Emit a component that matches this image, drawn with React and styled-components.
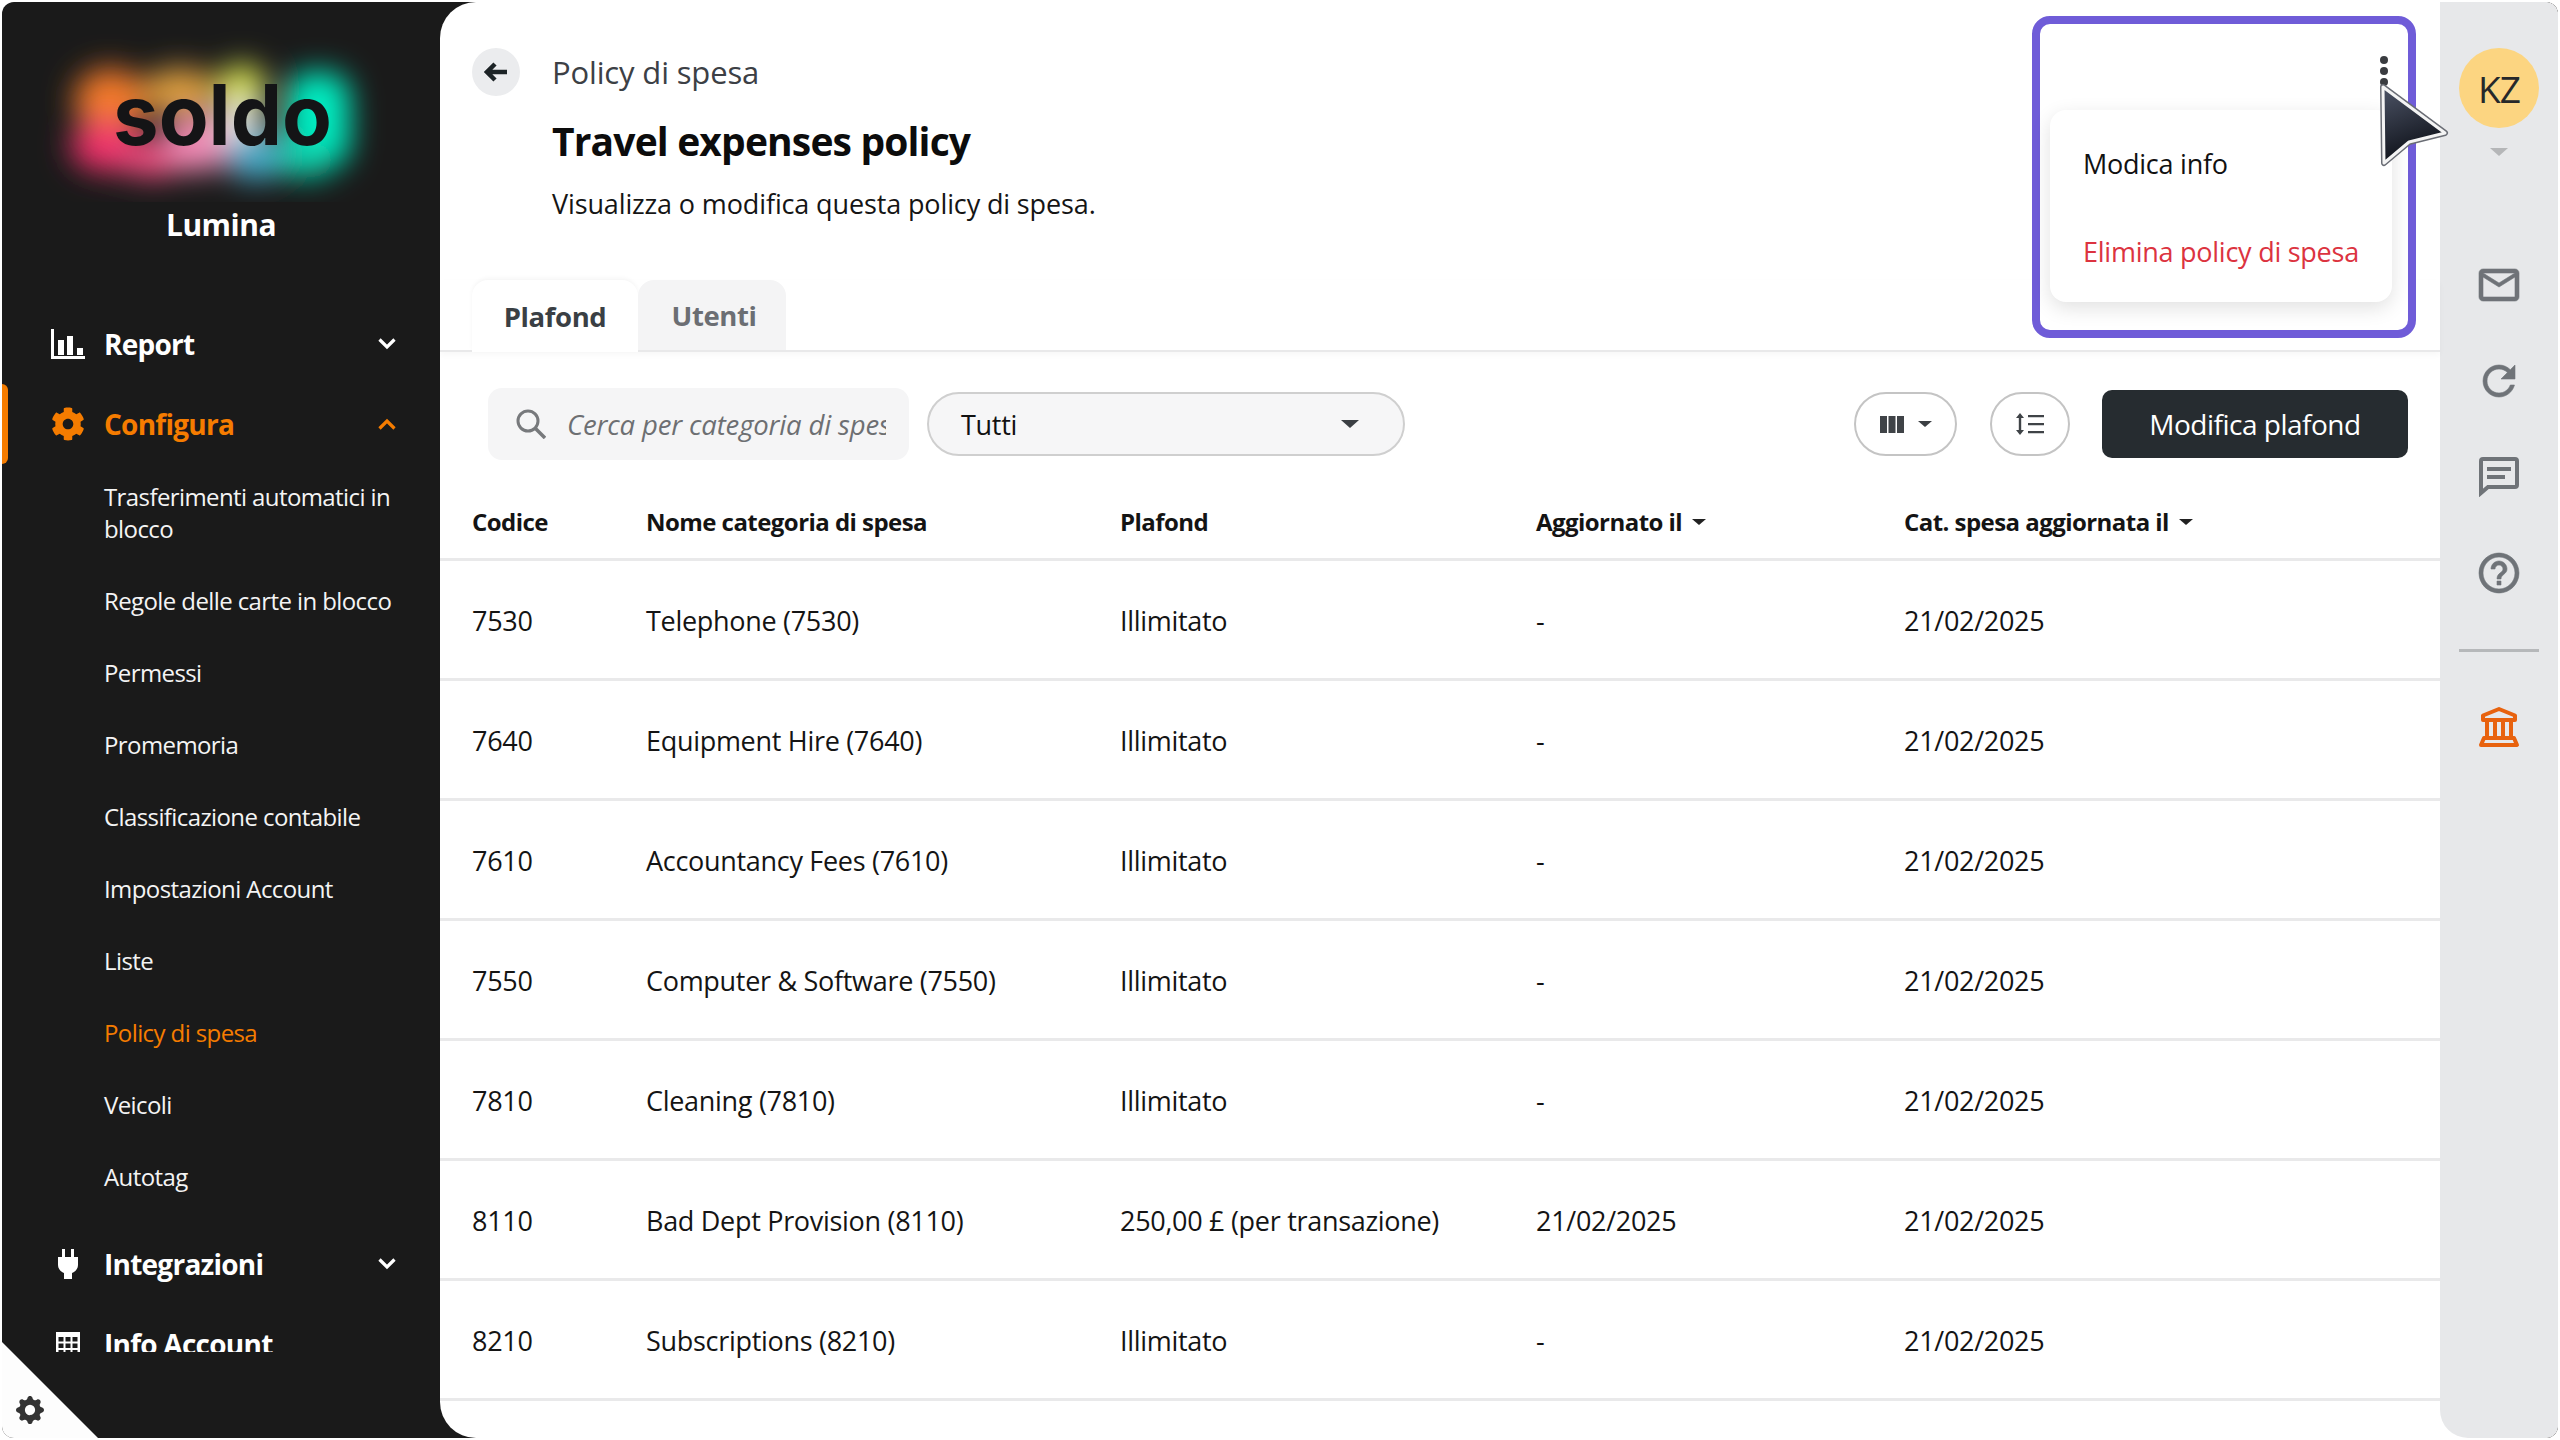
import React from "react";
import styled, { createGlobalStyle } from "styled-components";
import { FaCog } from "react-icons/fa";
import { BsGearFill } from "react-icons/bs";

const GlobalStyle = createGlobalStyle`
  html, body {
    margin: 0;
    padding: 0;
    background: #fff;
    font-family: "Open Sans", "Noto Sans", sans-serif;
    color: #111;
  }
  * { box-sizing: border-box; }
`;

const Frame = styled.div`
  position: relative;
  width: 2560px;
  height: 1440px;
  padding: 2px;
  overflow: hidden;
`;

const Shell = styled.div`
  display: flex;
  height: 100%;
  background: #1a1a1a;
  border-radius: 12px;
  overflow: hidden;
`;

/* ---------- left sidebar ---------- */

const Sidebar = styled.aside`
  position: relative;
  flex: 0 0 438px;
  display: flex;
  flex-direction: column;
  color: #fff;
`;

const LogoArt = styled.svg`
  display: block;
  width: 438px;
  height: 200px;
`;

const Workspace = styled.div`
  height: 46px;
  margin-bottom: 56px;
  line-height: 46px;
  text-align: center;
  font-size: 30px;
  font-weight: 700;
  letter-spacing: -0.5px;
`;

const Nav = styled.nav`
  height: 1048px;
  overflow: hidden;
`;

const NavRow = styled.div`
  position: relative;
  display: flex;
  align-items: center;
  height: 80px;
  padding: 0 44px 0 48px;
  font-size: 28px;
  font-weight: 700;
  letter-spacing: -0.75px;
  color: ${(p) => (p.$active ? "#f57c00" : "#fff")};

  ${(p) =>
    p.$active &&
    `&::before {
      content: "";
      position: absolute;
      left: 0;
      top: 0;
      width: 6px;
      height: 100%;
      background: #f57c00;
      border-radius: 0 6px 6px 0;
    }`}
`;

const NavIcon = styled.span`
  flex: 0 0 36px;
  display: flex;
  justify-content: center;
  margin-right: 18px;
  font-size: 34px;
  line-height: 0;
`;

const NavLabel = styled.span`
  flex: 1;
`;

const SubMenu = styled.div`
  margin: -3px 0 11px;
`;

const SubItem = styled.div`
  padding: 20px 24px 20px 102px;
  font-size: 24px;
  line-height: 32px;
  letter-spacing: -0.6px;
  color: ${(p) => (p.$active ? "#f57c00" : "#f4f4f4")};
`;

const SettingsCorner = styled.div`
  position: absolute;
  left: 0;
  bottom: 0;
  width: 96px;
  height: 96px;
  background: #fdfdfd;
  clip-path: polygon(0 0, 100% 100%, 0 100%);
  color: #333;
  font-size: 28px;

  svg {
    position: absolute;
    left: 14px;
    bottom: 14px;
  }
`;

/* ---------- main panel ---------- */

const Main = styled.div`
  flex: 1;
  display: flex;
  background: #fff;
  border-radius: 36px 12px 12px 36px;
  overflow: hidden;
`;

const Content = styled.main`
  position: relative;
  flex: 1;
  min-width: 0;
`;

const BackRow = styled.div`
  display: flex;
  align-items: center;
  gap: 32px;
  padding: 46px 0 0 32px;
`;

const BackButton = styled.button`
  display: flex;
  align-items: center;
  justify-content: center;
  width: 48px;
  height: 48px;
  padding: 0;
  border: 0;
  border-radius: 50%;
  background: #ebecee;
  color: #1c2326;
`;

const Crumb = styled.span`
  font-size: 31px;
  letter-spacing: -0.15px;
  color: #3c4045;
`;

const TitleBlock = styled.div`
  padding: 17px 0 0 112px;
`;

const Title = styled.h1`
  margin: 0;
  font-size: 39px;
  line-height: 56px;
  font-weight: 700;
  letter-spacing: -0.85px;
  color: #0c0c0c;
`;

const Subtitle = styled.p`
  margin: 17px 0 0;
  font-size: 27px;
  line-height: 36px;
  letter-spacing: -0.13px;
  color: #151515;
`;

const TabBar = styled.div`
  display: flex;
  height: 72px;
  margin-top: 58px;
  padding-left: 32px;
  border-bottom: 2px solid #e9e9ea;
  box-shadow: 0 3px 6px rgba(0, 0, 0, 0.03);
`;

const Tab = styled.div`
  display: flex;
  align-items: center;
  justify-content: center;
  width: ${(p) => p.$width}px;
  height: ${(p) => (p.$active ? "72px" : "70px")};
  padding-left: ${(p) => (p.$active ? "0" : "4px")};
  border-radius: 16px 16px 0 0;
  font-size: 27.5px;
  font-weight: 700;
  letter-spacing: -0.4px;
  background: ${(p) => (p.$active ? "#fff" : "#f4f4f5")};
  color: ${(p) => (p.$active ? "#3a3f44" : "#6b6e73")};
  box-shadow: ${(p) => (p.$active ? "0 -2px 4px rgba(0,0,0,.04)" : "none")};
  position: relative;
`;

const Toolbar = styled.div`
  display: flex;
  align-items: center;
  height: 72px;
  margin-top: 36px;
  padding: 0 32px 0 48px;
`;

const SearchBox = styled.label`
  display: flex;
  align-items: center;
  gap: 21px;
  width: 421px;
  height: 72px;
  padding: 0 23px 0 28px;
  background: #f5f5f6;
  border-radius: 14px;
  color: #6f7174;
`;

const SearchInput = styled.input`
  flex: 1;
  min-width: 0;
  border: 0;
  padding: 0;
  background: transparent;
  font: italic 27.5px "Open Sans", sans-serif;
  letter-spacing: -0.15px;

  &::placeholder {
    color: #6d6f72;
    opacity: 1;
  }
`;

const SelectBox = styled.div`
  display: flex;
  align-items: center;
  justify-content: space-between;
  width: 478px;
  height: 64px;
  margin-left: 18px;
  padding: 0 44px 0 32px;
  background: #f6f6f7;
  border: 2px solid #cfcfcf;
  border-radius: 32px;
  font-size: 27px;
  letter-spacing: -0.3px;
`;

const Spacer = styled.div`
  flex: 1;
`;

const Caret = styled.span`
  display: inline-block;
  width: 0;
  height: 0;
  border-left: ${(p) => p.$size}px solid transparent;
  border-right: ${(p) => p.$size}px solid transparent;
  border-top: ${(p) => Math.round(p.$size * 0.9)}px solid ${(p) => p.$color || "#3b3f43"};
`;

const PillButton = styled.button`
  display: flex;
  align-items: center;
  justify-content: center;
  gap: 14px;
  width: ${(p) => p.$width}px;
  height: 64px;
  margin-right: ${(p) => p.$gap}px;
  padding: 0;
  background: #fff;
  border: 2px solid #c4c4c4;
  border-radius: 32px;
`;

const PrimaryButton = styled.button`
  width: 306px;
  height: 68px;
  padding: 0;
  border: 0;
  border-radius: 10px;
  background: #262c30;
  color: #fff;
  font: 28px "Open Sans", sans-serif;
  letter-spacing: -0.5px;
`;

const TableRow = styled.div`
  display: grid;
  grid-template-columns: 174px 474px 416px 368px 1fr;
  align-items: center;
  height: ${(p) => (p.$head ? "76px" : "120px")};
  padding-left: 32px;
  padding-top: ${(p) => (p.$head ? "0" : "2px")};
  border-bottom: 3px solid #e9e9ea;
  font-size: ${(p) => (p.$head ? "24px" : "27px")};
  font-weight: ${(p) => (p.$head ? 700 : 400)};
  letter-spacing: ${(p) => (p.$head ? "-0.55px" : "-0.3px")};
  color: #141414;
  ${(p) => p.$head && "margin-top: 25px;"}
`;

const HeadCell = styled.span`
  display: flex;
  align-items: center;
  gap: 10px;
`;

/* ---------- overflow menu with highlight ---------- */

const Highlight = styled.div`
  position: absolute;
  top: 14px;
  right: 24px;
  display: flex;
  flex-direction: column;
  width: 384px;
  height: 322px;
  background: #fff;
  border: 8px solid #6f5cd8;
  border-radius: 18px;
`;

const Kebab = styled.div`
  display: flex;
  flex-direction: column;
  gap: 3px;
  align-self: flex-end;
  margin: 32px 20px 0 0;
`;

const KebabDot = styled.span`
  width: 8px;
  height: 8px;
  border-radius: 50%;
  background: #3a3c40;
`;

const Menu = styled.div`
  height: 192px;
  margin: 24px 16px 0 10px;
  padding: 9px 0 7px 33px;
  background: #fff;
  border-radius: 16px;
  box-shadow: 0 6px 20px rgba(0, 0, 0, 0.12);
`;

const MenuItem = styled.div`
  display: flex;
  align-items: center;
  height: 88px;
  font-size: 27px;
  letter-spacing: -0.25px;
  color: ${(p) => (p.$danger ? "#dc3340" : "#111")};
`;

const Pointer = styled.svg`
  position: absolute;
  left: 2376px;
  top: 80px;
  width: 76px;
  height: 90px;
`;

/* ---------- right rail ---------- */

const Rail = styled.aside`
  flex: 0 0 118px;
  display: flex;
  flex-direction: column;
  align-items: center;
  padding-top: 46px;
  background: #e7e8ea;
  border-radius: 0 12px 12px 28px;
  color: #6f7378;
`;

const Avatar = styled.div`
  display: flex;
  align-items: center;
  justify-content: center;
  width: 80px;
  height: 80px;
  margin-bottom: 20px;
  border-radius: 50%;
  background: #fcd581;
  color: #26282a;
  font-size: 37px;
  letter-spacing: -1px;
`;

const RailSlot = styled.div`
  display: flex;
  align-items: center;
  justify-content: center;
  height: 96px;
  line-height: 0;
`;

const RailIcons = styled.div`
  margin-top: 81px;
`;

const RailDivider = styled.div`
  width: 80px;
  height: 3px;
  margin: 28px 0 27px;
  background: #b6b8ba;
`;

/* ---------- drawn icons ---------- */

const SoldoLogo = () => (
  <LogoArt viewBox="0 0 438 200">
    <defs>
      <filter id="glow" x="-30%" y="-30%" width="160%" height="160%">
        <feGaussianBlur stdDeviation="15" />
      </filter>
    </defs>
    <g filter="url(#glow)">
      <ellipse cx="108" cy="98" rx="36" ry="32" fill="#f47a2a" />
      <ellipse cx="104" cy="144" rx="36" ry="26" fill="#f0306a" />
      <ellipse cx="178" cy="90" rx="38" ry="24" fill="#e0a040" />
      <ellipse cx="150" cy="156" rx="36" ry="20" fill="#ee4c7e" />
      <ellipse cx="196" cy="142" rx="34" ry="28" fill="#f48cb8" />
      <ellipse cx="240" cy="86" rx="24" ry="24" fill="#dce650" />
      <ellipse cx="238" cy="120" rx="22" ry="22" fill="#f0f0e8" />
      <ellipse cx="254" cy="154" rx="32" ry="24" fill="#4aaccc" />
      <rect x="284" y="70" width="64" height="96" rx="24" fill="#00eec2" />
      <ellipse cx="304" cy="158" rx="30" ry="18" fill="#0cd0ac" />
    </g>
    <text
      x="111"
      y="143"
      textLength="219"
      lengthAdjust="spacingAndGlyphs"
      fontFamily="Inter, sans-serif"
      fontSize="84"
      fontWeight="700"
      fill="#141416"
    >
      soldo
    </text>
  </LogoArt>
);

const BarsIcon = () => (
  <svg width="34" height="30" viewBox="0 0 34 30" fill="#fff">
    <path d="M0 0h3v27h31v3H0z" />
    <path d="M7 11h6v15H7zM16 7h6v19h-6zM26 19h6v7h-6z" />
  </svg>
);

const PlugIcon = () => (
  <svg width="22" height="30" viewBox="0 0 22 30" fill="#fff">
    <path d="M5 0h3v8H5zM14 0h3v8h-3z" />
    <path d="M1 8h20v8c0 4-3 7-6 8v6H7v-6c-3-1-6-4-6-8z" />
  </svg>
);

const GridIcon = () => (
  <svg width="24" height="24" viewBox="0 0 24 24">
    <rect width="24" height="24" fill="#fff" />
    <path
      d="M2.500 5h5v4.500h-5zM9.500 5h5v4.500h-5zM16.500 5h5v4.500h-5zM2.500 11.500h5v4.500h-5zM9.500 11.500h5v4.500h-5zM16.500 11.500h5v4.500h-5zM2.500 18h5v4h-5zM9.500 18h5v4h-5zM16.500 18h5v4h-5z"
      fill="#1a1a1a"
    />
  </svg>
);

const Chevron = ({ up }) => (
  <svg width="18" height="12" viewBox="0 0 18 12" fill="none" stroke="currentColor" strokeWidth="3.2">
    <path d={up ? "M1.500 10.500L9 3l7.500 7.500" : "M1.500 1.500L9 9l7.500-7.500"} />
  </svg>
);

const BackArrow = () => (
  <svg width="24" height="20" viewBox="0 0 24 20" fill="none" stroke="currentColor" strokeWidth="4.5">
    <path d="M11 2L3 10l8 8M3 10h20" />
  </svg>
);

const SearchIcon = () => (
  <svg width="30" height="30" viewBox="0 0 30 30" fill="none" stroke="#77797c" strokeWidth="3">
    <circle cx="12" cy="12" r="10" />
    <path d="M19 19l10 10" strokeWidth="3.500" />
  </svg>
);

const ColumnsIcon = () => (
  <svg width="24" height="17" viewBox="0 0 24 17" fill="#3f4347">
    <path d="M0 0h7v17H0zM8.500 0h7v17h-7zM17 0h7v17h-7z" />
  </svg>
);

const LineHeightIcon = () => (
  <svg width="28" height="22" viewBox="0 0 28 22" fill="#3f4347">
    <path d="M4 0l4 5H5.200v12H8l-4 5-4-5h2.800V5H0z" />
    <path d="M12 2h16v2.200H12zM12 10h16v2.200H12zM12 18h16v2.200H12z" />
  </svg>
);

const RailGlyph = ({ d }) => (
  <svg width="48" height="48" viewBox="0 0 24 24" fill="currentColor" stroke="currentColor" strokeWidth="0.3">
    <path d={d} />
  </svg>
);

const MAIL = "M20 4H4c-1.100 0-1.990.9-1.990 2L2 18c0 1.100.9 2 2 2h16c1.100 0 2-.9 2-2V6c0-1.100-.9-2-2-2zm0 14H4V8l8 5 8-5v10zm-8-7L4 6h16l-8 5z";
const REFRESH = "M17.650 6.350C16.200 4.900 14.210 4 12 4c-4.420 0-7.990 3.580-7.990 8s3.570 8 7.990 8c3.730 0 6.840-2.550 7.730-6h-2.080c-.82 2.330-3.040 4-5.650 4-3.310 0-6-2.690-6-6s2.690-6 6-6c1.660 0 3.140.69 4.220 1.780L13 11h7V4l-2.350 2.350z";
const HELP = "M11 18h2v-2h-2v2zm1-16C6.480 2 2 6.480 2 12s4.480 10 10 10 10-4.480 10-10S17.520 2 12 2zm0 18c-4.410 0-8-3.590-8-8s3.590-8 8-8 8 3.590 8 8-3.590 8-8 8zm0-14c-2.210 0-4 1.790-4 4h2c0-1.100.9-2 2-2s2 .9 2 2c0 2-3 1.750-3 5h2c0-2.250 3-2.500 3-5 0-2.210-1.790-4-4-4z";

const ChatIcon = () => (
  <svg width="40" height="40" viewBox="0 0 40 40" fill="none" stroke="currentColor" strokeWidth="4">
    <path d="M4 2h32a2 2 0 0 1 2 2v24a2 2 0 0 1-2 2H9l-7 6V4a2 2 0 0 1 2-2z" />
    <path d="M8 12h24M8 20h18" />
  </svg>
);

const BankIcon = () => (
  <svg width="42" height="42" viewBox="0 0 42 42" fill="none" stroke="#e8620e" strokeWidth="4">
    <path d="M21 3L37 9.500V14H5V9.500z" strokeLinejoin="round" />
    <path d="M9 14v18M17 14v18M25 14v18M33 14v18" />
    <path d="M6 32h30l3 7H3z" strokeLinejoin="round" />
  </svg>
);

const CursorIcon = () => (
  <Pointer viewBox="0 0 76 90">
    <defs>
      <linearGradient id="cursorFill" x1="0" y1="0" x2="0.3" y2="1">
        <stop offset="0" stopColor="#4d5466" />
        <stop offset="1" stopColor="#0d1018" />
      </linearGradient>
    </defs>
    <path d="M7 7L69 53L33 62L8 83Z" fill="none" stroke="#6a6d75" strokeWidth="6" strokeLinejoin="round" />
    <path
      d="M7 7L69 53L33 62L8 83Z"
      fill="url(#cursorFill)"
      stroke="#f4f4f4"
      strokeWidth="3"
      strokeLinejoin="round"
    />
  </Pointer>
);

/* ---------- data ---------- */

const subItems = [
  "Trasferimenti automatici in blocco",
  "Regole delle carte in blocco",
  "Permessi",
  "Promemoria",
  "Classificazione contabile",
  "Impostazioni Account",
  "Liste",
  "Policy di spesa",
  "Veicoli",
  "Autotag",
];

const rows = [
  ["7530", "Telephone (7530)", "Illimitato", "-"],
  ["7640", "Equipment Hire (7640)", "Illimitato", "-"],
  ["7610", "Accountancy Fees (7610)", "Illimitato", "-"],
  ["7550", "Computer & Software (7550)", "Illimitato", "-"],
  ["7810", "Cleaning (7810)", "Illimitato", "-"],
  ["8110", "Bad Dept Provision (8110)", "250,00 £ (per transazione)", "21/02/2025"],
  ["8210", "Subscriptions (8210)", "Illimitato", "-"],
];

export default function App() {
  return (
    <>
      <GlobalStyle />
      <Frame>
        <Shell>
          <Sidebar>
            <SoldoLogo />
            <Workspace>Lumina</Workspace>
            <Nav>
              <NavRow>
                <NavIcon><BarsIcon /></NavIcon>
                <NavLabel>Report</NavLabel>
                <Chevron />
              </NavRow>
              <NavRow $active>
                <NavIcon><FaCog /></NavIcon>
                <NavLabel>Configura</NavLabel>
                <Chevron up />
              </NavRow>
              <SubMenu>
                {subItems.map((item) => (
                  <SubItem key={item} $active={item === "Policy di spesa"}>
                    {item}
                  </SubItem>
                ))}
              </SubMenu>
              <NavRow>
                <NavIcon><PlugIcon /></NavIcon>
                <NavLabel>Integrazioni</NavLabel>
                <Chevron />
              </NavRow>
              <NavRow>
                <NavIcon><GridIcon /></NavIcon>
                <NavLabel>Info Account</NavLabel>
              </NavRow>
            </Nav>
            <SettingsCorner>
              <BsGearFill />
            </SettingsCorner>
          </Sidebar>

          <Main>
            <Content>
              <BackRow>
                <BackButton><BackArrow /></BackButton>
                <Crumb>Policy di spesa</Crumb>
              </BackRow>
              <TitleBlock>
                <Title>Travel expenses policy</Title>
                <Subtitle>Visualizza o modifica questa policy di spesa.</Subtitle>
              </TitleBlock>

              <TabBar>
                <Tab $active $width={166}>Plafond</Tab>
                <Tab $width={148}>Utenti</Tab>
              </TabBar>

              <Toolbar>
                <SearchBox>
                  <SearchIcon />
                  <SearchInput placeholder="Cerca per categoria di spesa" />
                </SearchBox>
                <SelectBox>
                  Tutti
                  <Caret $size={9} />
                </SelectBox>
                <Spacer />
                <PillButton $width={103} $gap={33}>
                  <ColumnsIcon />
                  <Caret $size={7} />
                </PillButton>
                <PillButton $width={80} $gap={32}>
                  <LineHeightIcon />
                </PillButton>
                <PrimaryButton>Modifica plafond</PrimaryButton>
              </Toolbar>

              <TableRow $head>
                <HeadCell>Codice</HeadCell>
                <HeadCell>Nome categoria di spesa</HeadCell>
                <HeadCell>Plafond</HeadCell>
                <HeadCell>Aggiornato il <Caret $size={7} $color="#222" /></HeadCell>
                <HeadCell>Cat. spesa aggiornata il <Caret $size={7} $color="#222" /></HeadCell>
              </TableRow>
              {rows.map((row) => (
                <TableRow key={row[0]}>
                  {row.map((cell, i) => (
                    <span key={i}>{cell}</span>
                  ))}
                  <span>21/02/2025</span>
                </TableRow>
              ))}

              <Highlight>
                <Kebab>
                  <KebabDot />
                  <KebabDot />
                  <KebabDot />
                </Kebab>
                <Menu>
                  <MenuItem>Modica info</MenuItem>
                  <MenuItem $danger>Elimina policy di spesa</MenuItem>
                </Menu>
              </Highlight>
            </Content>

            <Rail>
              <Avatar>KZ</Avatar>
              <Caret $size={9} $color="#b5b6b8" />
              <RailIcons>
                <RailSlot><RailGlyph d={MAIL} /></RailSlot>
                <RailSlot><RailGlyph d={REFRESH} /></RailSlot>
                <RailSlot><ChatIcon /></RailSlot>
                <RailSlot><RailGlyph d={HELP} /></RailSlot>
              </RailIcons>
              <RailDivider />
              <RailSlot><BankIcon /></RailSlot>
            </Rail>
          </Main>
        </Shell>
        <CursorIcon />
      </Frame>
    </>
  );
}
